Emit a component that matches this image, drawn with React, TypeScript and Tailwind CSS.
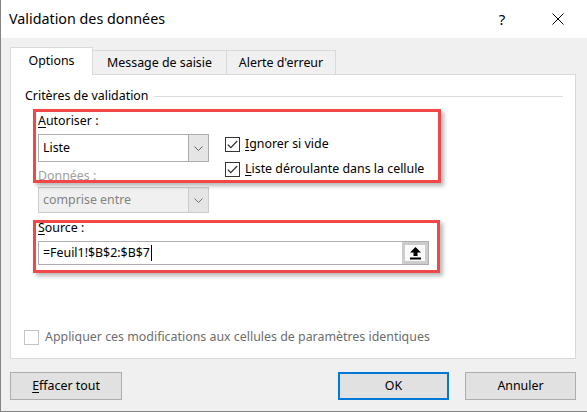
import React from 'react';

function Chevron({ color = '#606060' }: { color?: string }) {
  return (
    <svg width="9" height="5" viewBox="0 0 9 5" fill="none" stroke={color} strokeWidth="1">
      <path d="M0.5 0.5l4 4 4-4" />
    </svg>
  );
}

function Checkbox({ checked, disabled }: { checked?: boolean; disabled?: boolean }) {
  return (
    <span
      className={`flex h-[15px] w-[15px] shrink-0 items-center justify-center border bg-white ${
        disabled ? 'border-[#c4c4c4]' : 'border-[#333333]'
      }`}
    >
      {checked && (
        <svg width="11" height="9" viewBox="0 0 11 9" fill="none" stroke="#333333" strokeWidth="1.3">
          <path d="M0.8 4.6l3 3 6.4-6.6" />
        </svg>
      )}
    </span>
  );
}

export default function App() {
  return (
    <div className="relative flex h-[412px] w-[587px] flex-col overflow-hidden border-b border-l border-[#858585] bg-[#f0f0f0] font-['Noto_Sans',sans-serif] text-[12.4px] leading-[16px] text-black">
      {/* Title bar */}
      <div className="flex h-[38px] shrink-0 items-center bg-white pl-[8px]">
        <span className="text-[14.3px] leading-[20px]">Validation des données</span>
        <span className="ml-auto w-[14px] text-center text-[15px] leading-[20px]">?</span>
        <span className="ml-[42px] mr-[22px] flex h-[14px] w-[14px] items-center justify-center">
          <svg width="12" height="12" viewBox="0 0 12 12" stroke="#000" strokeWidth="1">
            <path d="M0.5 0.5l11 11M11.5 0.5l-11 11" />
          </svg>
        </span>
      </div>

      {/* Tabs */}
      <div className="ml-[9px] mt-[9px] flex items-end">
        <div className="relative z-10 flex h-[28px] w-[83px] items-center justify-center border border-b-0 border-[#d9d9d9] bg-white pb-[2px]">
          Options
        </div>
        <div className="-ml-px flex h-[25px] w-[135px] items-center justify-center border border-b-0 border-[#d9d9d9] bg-[#f0f0f0]">
          Message de saisie
        </div>
        <div className="-ml-px flex h-[25px] w-[110px] items-center justify-center border border-b-0 border-[#d9d9d9] bg-[#f0f0f0]">
          Alerte d'erreur
        </div>
      </div>

      {/* Panel */}
      <div className="relative -mt-px ml-[9px] h-[285px] w-[566px] border border-[#d9d9d9] bg-white">
        <div className="flex items-center pl-[14px] pr-[12px] pt-[13px]">
          <span>Critères de validation</span>
          <span className="ml-[5px] h-px flex-1 bg-[#dcdcdc]" />
        </div>

        <div className="mt-[9px] flex pl-[27px]">
          <div className="flex w-[171px] flex-col">
            <span className="h-[16px]">
              <span className="underline underline-offset-2">A</span>utoriser :
            </span>
            <div className="mt-[5px] flex h-[28px] border border-[#adadad] bg-white">
              <span className="flex flex-1 items-center pl-[4px]">Liste</span>
              <span className="flex w-[20px] items-center justify-center border-l border-[#adadad] bg-[#e5e5e5]">
                <Chevron />
              </span>
            </div>
            <span className="mt-[6px] h-[16px] text-[#a0a0a0]">Données :</span>
            <div className="mt-[3px] flex h-[26px] border border-[#cccccc] bg-[#f0f0f0]">
              <span className="flex flex-1 items-center pl-[4px] text-[#838383]">comprise entre</span>
              <span className="flex w-[20px] items-center justify-center border-l border-[#cccccc] bg-[#e5e5e5]">
                <Chevron color="#707070" />
              </span>
            </div>
          </div>

          <div className="ml-[16px] flex flex-col gap-[9px] pt-[23px]">
            <div className="flex h-[16px] items-center gap-[5px]">
              <Checkbox checked />
              <span>
                <span className="underline underline-offset-2">I</span>gnorer si vide
              </span>
            </div>
            <div className="flex h-[16px] items-center gap-[5px]">
              <Checkbox checked />
              <span>
                <span className="underline underline-offset-2">L</span>iste déroulante dans la cellule
              </span>
            </div>
          </div>
        </div>

        <div className="mt-[7px] flex flex-col pl-[27px]">
          <span className="h-[16px]">
            <span className="underline underline-offset-2">S</span>ource :
          </span>
          <div className="mt-[5px] flex h-[24px] w-[391px] border border-[#adadad] bg-white">
            <span className="flex flex-1 items-center pl-[4px]">
              =Feuil1!$B$2:$B$7
              <span className="ml-px inline-block h-[16px] w-px bg-black" />
            </span>
            <span className="flex w-[26px] items-center justify-center border-[3px] border-[#cccccc] bg-[#fafafa]">
              <svg width="13" height="14" viewBox="0 0 13 14" fill="#000">
                <polygon points="6.5,1 12,6.5 8.5,6.5 8.5,10 4.5,10 4.5,6.5 1,6.5" />
                <rect x="1" y="11.5" width="11" height="2" />
              </svg>
            </span>
          </div>
        </div>

        <div className="mt-[64px] flex h-[16px] items-center gap-[6px] pl-[13px]">
          <Checkbox disabled />
          <span className="text-[#6d6d6d]">Appliquer ces modifications aux cellules de paramètres identiques</span>
        </div>

        {/* Annotation boxes */}
        <div className="pointer-events-none absolute left-[22px] top-[34px] h-[74px] w-[408px] border-[3px] border-[#f04848] shadow-[3px_3px_4px_rgba(0,0,0,0.28)]" />
        <div className="pointer-events-none absolute left-[22px] top-[145px] h-[53px] w-[407px] border-[3px] border-[#f04848] shadow-[3px_3px_4px_rgba(0,0,0,0.28)]" />
      </div>

      {/* Buttons */}
      <div className="ml-[9px] mt-[13px] flex w-[566px]">
        <button className="flex h-[28px] w-[112px] items-center justify-center border border-[#adadad] bg-[#e1e1e1]">
          <span>
            <span className="underline underline-offset-2">E</span>ffacer tout
          </span>
        </button>
        <button className="ml-auto flex h-[28px] w-[111px] items-center justify-center border-2 border-[#0078d7] bg-[#e1e1e1]">
          OK
        </button>
        <button className="ml-[16px] flex h-[28px] w-[111px] items-center justify-center border border-[#adadad] bg-[#e1e1e1]">
          Annuler
        </button>
      </div>
    </div>
  );
}
